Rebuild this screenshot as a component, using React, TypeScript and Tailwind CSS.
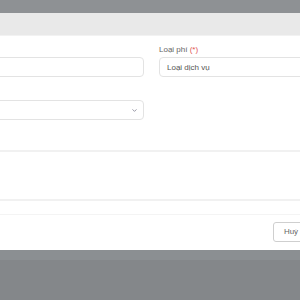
import { ChevronDown } from 'lucide-react';

export default function App() {
  return (
    <div className="w-[300px] h-[300px] overflow-hidden bg-[#84878a] font-['Liberation_Sans',Arial,sans-serif]">
      <div className="h-[13px] bg-[#8e9194]" />
      <div className="-ml-[72px] w-[447px] bg-white">
        <div className="h-[23px] bg-[#e9e9e9] border-b border-[#f2f2f2]" />
        <div className="grid grid-cols-2 gap-x-[15px] px-[15px] pt-[7px]">
          <div>
            <div className="h-[14px] text-[8px] leading-[14px] text-[#666]">Tên</div>
            <input className="block w-full h-[20px] rounded-[4px] border border-[#e3e3e3] px-[7px] text-[8px] text-[#555] outline-none" />
          </div>
          <div>
            <div className="h-[14px] text-[8px] leading-[14px] text-[#666]">Loại phí <span className="text-[#e05555]">(*)</span></div>
            <input
              className="block w-full h-[20px] rounded-[4px] border border-[#e3e3e3] px-[7px] text-[8px] text-[#555] outline-none"
              defaultValue="Loại dịch vụ"
            />
          </div>
          <div className="pt-[9px]">
            <div className="h-[14px] text-[8px] leading-[14px] text-[#666]">Kỳ</div>
            <div className="flex h-[20px] items-center justify-end rounded-[4px] border border-[#e3e3e3] pr-[5px]">
              <ChevronDown className="w-[7px] h-[7px] text-[#8a8a99]" strokeWidth={3} />
            </div>
          </div>
          <div />
        </div>
        <div className="mt-[30px] h-[49px] border-t-2 border-[#f1f1f1]" />
        <div className="h-[15px] border-t-2 border-[#f1f1f1]" />
        <div className="flex justify-end gap-[6px] border-t border-[#f4f4f4] px-[15px] pt-[7px] pb-[8px]">
          <button className="h-[20px] w-[36px] rounded-[3px] border border-[#cfcfcf] bg-white text-[8px] text-[#666]">Huỷ</button>
          <button className="h-[20px] w-[45px] rounded-[3px] bg-[#2f80ed] text-[8px] text-white">Lưu</button>
        </div>
      </div>
      <div className="h-[10px] bg-[#8b8f92]" />
    </div>
  );
}
